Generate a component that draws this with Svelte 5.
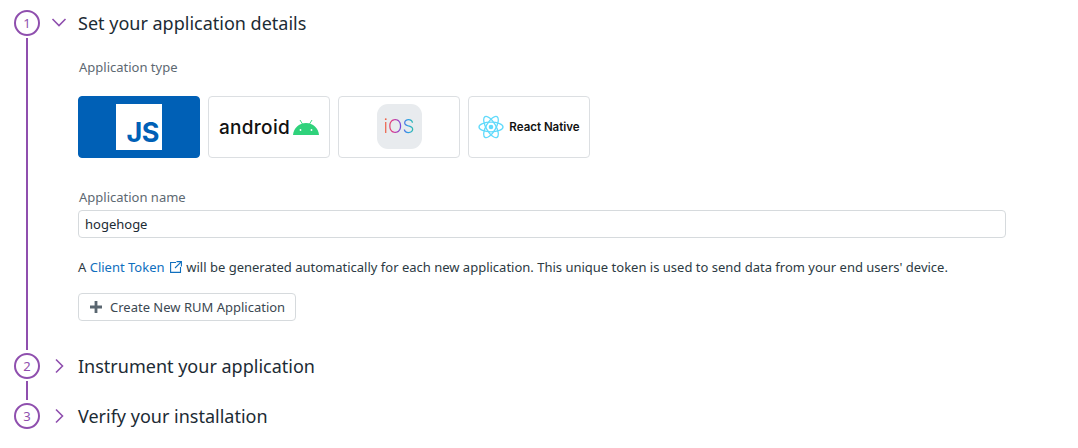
<script>
  const types = ["js", "android", "ios", "react"];
</script>

<div class="steps">
  <section class="step open">
    <div class="rail">
      <span class="num">1</span>
      <span class="line"></span>
    </div>
    <div class="body">
      <h2 class="head">
        <svg class="chev" width="16" height="26" viewBox="0 0 16 26"><path d="M1.5 9 L8 15.5 L14.5 9" /></svg>
        Set your application details
      </h2>
      <div class="label type-label">Application type</div>
      <div class="types">
        {#each types as t}
          <div class="card" class:active={t === "js"}>
            {#if t === "js"}
              <div class="js"><span>JS</span></div>
            {:else if t === "android"}
              <span class="android">android</span>
              <svg class="droid" width="26" height="16" viewBox="0 0 26 16">
                <path d="M7 1 L9.5 5 M19 1 L16.5 5" stroke="#3ddc84" stroke-width="1" fill="none" />
                <path d="M0 16 C0.5 9 6 4 13 4 C20 4 25.5 9 26 16 Z" fill="#2fd27b" />
                <circle cx="7.5" cy="11" r="0.9" fill="#fff" />
                <circle cx="18.5" cy="11" r="0.9" fill="#fff" />
              </svg>
            {:else if t === "ios"}
              <div class="ios"><span>iOS</span></div>
            {:else}
              <svg width="26" height="24" viewBox="-13 -12 26 24" fill="none" stroke="#61dafb" stroke-width="1.3">
                <ellipse rx="12" ry="4.8" />
                <ellipse rx="12" ry="4.8" transform="rotate(60)" />
                <ellipse rx="12" ry="4.8" transform="rotate(120)" />
                <circle r="2.3" fill="#61dafb" stroke="none" />
              </svg>
              <span class="rn">React Native</span>
            {/if}
          </div>
        {/each}
      </div>
      <div class="label name-label">Application name</div>
      <input class="name" value="hogehoge" />
      <p class="hint">
        A <a href="#token">Client Token
          <svg width="12" height="12" viewBox="0 0 12 12" fill="none" stroke="#0f6fbe" stroke-width="1.1"><path d="M6 1.5 H0.6 V11.4 H10.5 V6 M6.5 0.6 H11.4 V5.5 M11.2 0.8 L5 7" /></svg></a>
        will be generated automatically for each new application. This unique token is used to send data from your end users' device.
      </p>
      <button class="create">
        <svg width="12" height="12" viewBox="0 0 12 12"><path d="M4.6 0 H7.4 V4.6 H12 V7.4 H7.4 V12 H4.6 V7.4 H0 V4.6 H4.6 Z" fill="#5a6670" /></svg>
        Create New RUM Application
      </button>
    </div>
  </section>

  <section class="step">
    <div class="rail">
      <span class="num">2</span>
      <span class="line"></span>
    </div>
    <div class="body">
      <h2 class="head">
        <svg class="chev" width="16" height="26" viewBox="0 0 16 26"><path d="M5 6.5 L11.5 13 L5 19.5" /></svg>
        Instrument your application
      </h2>
    </div>
  </section>

  <section class="step last">
    <div class="rail">
      <span class="num">3</span>
    </div>
    <div class="body">
      <h2 class="head">
        <svg class="chev" width="16" height="26" viewBox="0 0 16 26"><path d="M5 6.5 L11.5 13 L5 19.5" /></svg>
        Verify your installation
      </h2>
    </div>
  </section>
</div>

<style>
  :global(body) {
    background: #fff;
    font-family: "Noto Sans", "Open Sans", sans-serif;
    color: #1c2b34;
  }

  .steps {
    padding: 10px 72px 0 14px;
  }

  .step {
    display: grid;
    grid-template-columns: 26px 1fr;
    column-gap: 9px;
  }

  .rail {
    display: flex;
    flex-direction: column;
    align-items: center;
  }

  .num {
    flex: none;
    box-sizing: border-box;
    width: 26px;
    height: 26px;
    border: 2px solid #8f4fae;
    border-radius: 50%;
    color: #8f4fae;
    font-size: 13px;
    line-height: 22px;
    text-align: center;
  }

  .line {
    flex: 1;
    width: 2px;
    margin-top: 2px;
    margin-bottom: 3px;
    background: #8f4fae;
  }

  .step .body {
    padding-bottom: 24px;
  }

  .step.open .body {
    padding-bottom: 32px;
  }

  .step.last .body {
    padding-bottom: 0;
  }

  .head {
    display: flex;
    align-items: center;
    gap: 11px;
    height: 26px;
    margin: 0;
    padding-left: 2px;
    font-size: 18px;
    font-weight: 400;
    line-height: 26px;
    color: #1c2b34;
  }

  .chev {
    flex: none;
  }

  .chev path {
    fill: none;
    stroke: #8f4fae;
    stroke-width: 1.6;
  }

  .label {
    margin-left: 30px;
    font-size: 13px;
    line-height: 18px;
    color: #5d6972;
  }

  .type-label {
    margin-top: 22px;
  }

  .types {
    display: flex;
    gap: 8px;
    margin: 20px 0 0 29px;
  }

  .card {
    box-sizing: border-box;
    display: flex;
    align-items: center;
    justify-content: center;
    gap: 5px;
    width: 122px;
    height: 62px;
    border: 1px solid #dcdfe2;
    border-radius: 4px;
    background: #fff;
  }

  .card.active {
    border-color: #0060b6;
    background: #0060b6;
  }

  .js {
    box-sizing: border-box;
    display: flex;
    align-items: flex-end;
    justify-content: flex-end;
    width: 46px;
    height: 46px;
    padding: 0 3px 0 0;
    background: #fff;
  }

  .js span {
    color: #0060b6;
    font-family: "Inter", sans-serif;
    font-size: 27px;
    font-weight: 700;
    line-height: 34px;
    letter-spacing: -0.5px;
  }

  .android {
    font-family: "Inter", sans-serif;
    font-size: 19px;
    font-weight: 500;
    letter-spacing: 0.3px;
    color: #111;
  }

  .droid {
    margin-left: -2px;
  }

  .ios {
    display: flex;
    align-items: center;
    justify-content: center;
    width: 45px;
    height: 45px;
    margin-bottom: 1px;
    border-radius: 11px;
    background: #e8ebee;
  }

  .ios span {
    font-family: "Inter", sans-serif;
    font-size: 19px;
    font-weight: 300;
    background: linear-gradient(90deg, #f0703a, #d92f8e 30%, #7a46d8 55%, #2a9fe6 80%, #2fc0a0);
    -webkit-background-clip: text;
    background-clip: text;
    color: transparent;
  }

  .rn {
    font-family: "Inter", sans-serif;
    font-size: 11.5px;
    font-weight: 600;
    color: #111;
  }

  .name-label {
    margin-top: 30px;
  }

  .name {
    display: block;
    box-sizing: border-box;
    width: 928px;
    height: 28px;
    margin: 4px 0 0 29px;
    padding: 0 6px;
    border: 1px solid #d6dadd;
    border-radius: 4px;
    background: #fff;
    font: inherit;
    font-size: 13px;
    color: #1c2b34;
  }

  .hint {
    margin: 19px 0 0 29px;
    font-size: 13px;
    line-height: 20px;
    color: #2c3a43;
    white-space: nowrap;
  }

  .hint a {
    color: #0f6fbe;
    text-decoration: none;
  }

  .hint svg {
    margin: 0 1px 0 2px;
    vertical-align: -1px;
  }

  .create {
    display: flex;
    align-items: center;
    gap: 8px;
    box-sizing: border-box;
    width: 218px;
    height: 28px;
    margin: 16px 0 0 29px;
    padding: 0 0 0 11px;
    border: 1px solid #d6dadd;
    border-radius: 4px;
    background: #fff;
    font: inherit;
    font-size: 13px;
    color: #3c4852;
    white-space: nowrap;
  }

  .create svg {
    flex: none;
  }
</style>
